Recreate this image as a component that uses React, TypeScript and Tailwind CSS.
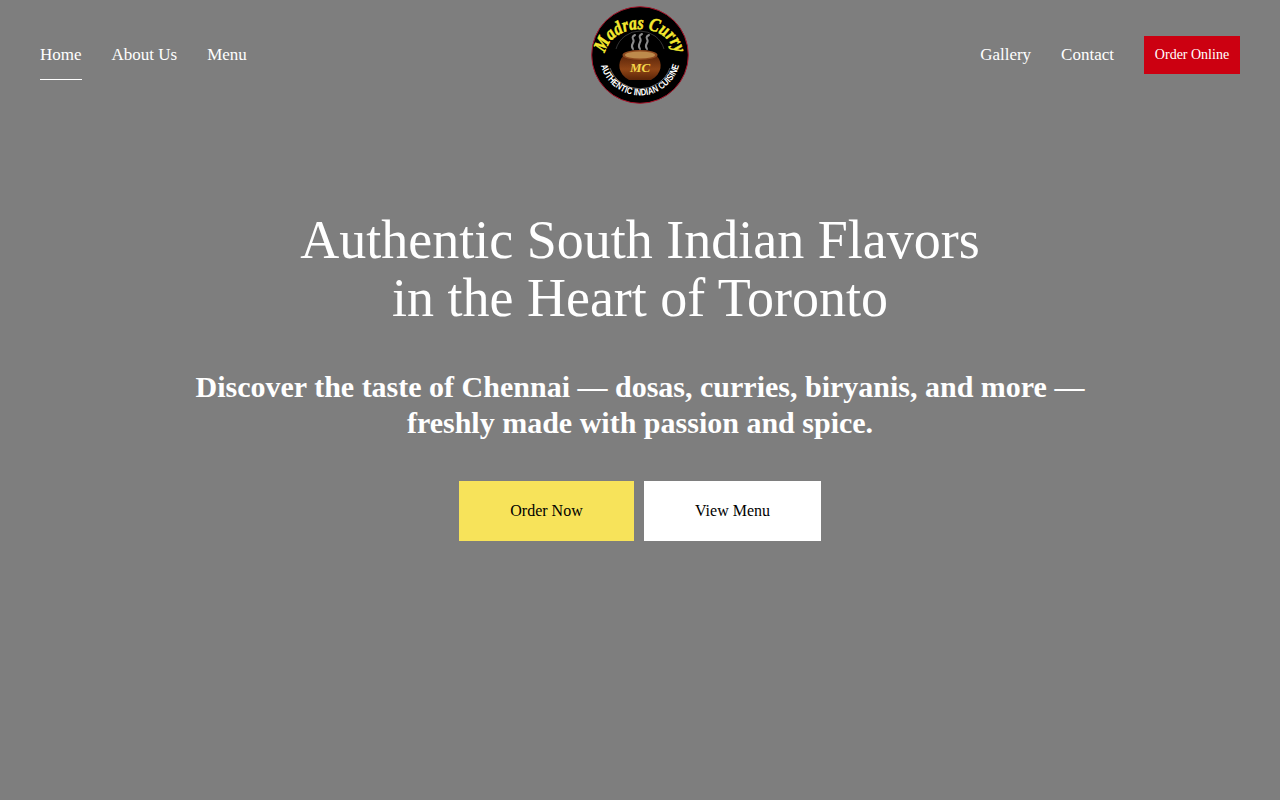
const serif = "font-['Liberation_Serif','Times_New_Roman',serif]";

function Logo() {
  return (
    <svg width="100" height="100" viewBox="0 0 100 100" className="block">
      <defs>
        <path id="logo-top" d="M 15 52 A 35 28 0 0 1 85 52" />
        <path id="logo-bottom" d="M 9.5 50 A 40.5 40.5 0 0 0 90.5 50" />
        <linearGradient id="pot" x1="0" y1="0" x2="0" y2="1">
          <stop offset="0" stopColor="#5f270b" />
          <stop offset="0.55" stopColor="#8f4516" />
          <stop offset="1" stopColor="#5a2408" />
        </linearGradient>
      </defs>
      <circle cx="50" cy="50" r="48.3" fill="#000" stroke="#a8142a" strokeWidth="1" />
      <path d="M 20 63 A 32 32 0 0 0 80 63" fill="none" stroke="#999" strokeWidth="0.6" />
      <path d="M 26 44 A 25 25 0 0 1 74 44" fill="none" stroke="#666" strokeWidth="0.5" />
      <text fill="#f5e92f" fontFamily="'Liberation Serif', serif" fontStyle="italic" fontWeight="700" fontSize="19" stroke="#f5e92f" strokeWidth="0.5">
        <textPath href="#logo-top" startOffset="50%" textAnchor="middle" textLength="92" lengthAdjust="spacingAndGlyphs">Madras Curry</textPath>
      </text>
      <text fill="#fff" fontFamily="'Liberation Sans', sans-serif" fontWeight="700" fontSize="9.5">
        <textPath href="#logo-bottom" startOffset="50%" textAnchor="middle" textLength="106" lengthAdjust="spacingAndGlyphs">AUTHENTIC INDIAN CUISINE</textPath>
      </text>
      <g fill="none" stroke="#8c8c8c" strokeWidth="2" strokeLinecap="round">
        <path d="M 43 44 C 39 39 46 38 43 34 C 42 32 43 31 45 30" />
        <path d="M 50 44 C 46 39 53 37 50 33 C 49 31 50 30 52 29" />
        <path d="M 57 44 C 53 39 60 38 57 34 C 56 32 57 31 59 30" />
      </g>
      <path d="M 33 51 C 27 58 28 69 39 75 L 61 75 C 72 69 73 58 67 51 Z" fill="url(#pot)" />
      <ellipse cx="50" cy="50" rx="17.5" ry="5" fill="#8f4a20" />
      <ellipse cx="50" cy="50" rx="15" ry="3.6" fill="#bd8a4c" />
      <text x="50" y="66.5" textAnchor="middle" fill="#f5d84a" fontFamily="'Liberation Serif', serif" fontStyle="italic" fontWeight="700" fontSize="13">MC</text>
    </svg>
  );
}

function NavLink({ label, active }: { label: string; active?: boolean }) {
  return (
    <a href="#" className="relative block text-[17px] leading-5 text-white">
      {label}
      {active && <span className="absolute left-0 right-0 top-[34px] h-px bg-white"></span>}
    </a>
  );
}

export default function App() {
  return (
    <div className={`${serif} min-h-[800px] bg-[#7e7e7e] text-white`}>
      <header className="flex h-[110px] items-center justify-between px-10">
        <nav className="flex w-[400px] items-center gap-[30px]">
          <NavLink label="Home" active />
          <NavLink label="About Us" />
          <NavLink label="Menu" />
        </nav>
        <Logo />
        <nav className="flex w-[400px] items-center justify-end gap-[30px]">
          <NavLink label="Gallery" />
          <NavLink label="Contact" />
          <a href="#" className="flex h-[38px] w-24 items-center justify-center bg-[#cc0011] text-sm text-white">
            Order Online
          </a>
        </nav>
      </header>

      <main className="flex flex-col items-center pt-[101px] text-center">
        <h1 className="text-[54px] leading-[58px] font-normal">
          Authentic South Indian Flavors
          <br />
          in the Heart of Toronto
        </h1>
        <p className="mt-[42px] text-[30px] leading-9 font-bold">
          Discover the taste of Chennai — dosas, curries, biryanis, and more —
          <br />
          freshly made with passion and spice.
        </p>
        <div className="mt-10 flex gap-2.5">
          <a href="#" className="flex h-[60px] w-[175px] items-center justify-center bg-[#f7e35a] text-base text-black">
            Order Now
          </a>
          <a href="#" className="flex h-[60px] w-[177px] items-center justify-center bg-white text-base text-black">
            View Menu
          </a>
        </div>
      </main>
    </div>
  );
}
